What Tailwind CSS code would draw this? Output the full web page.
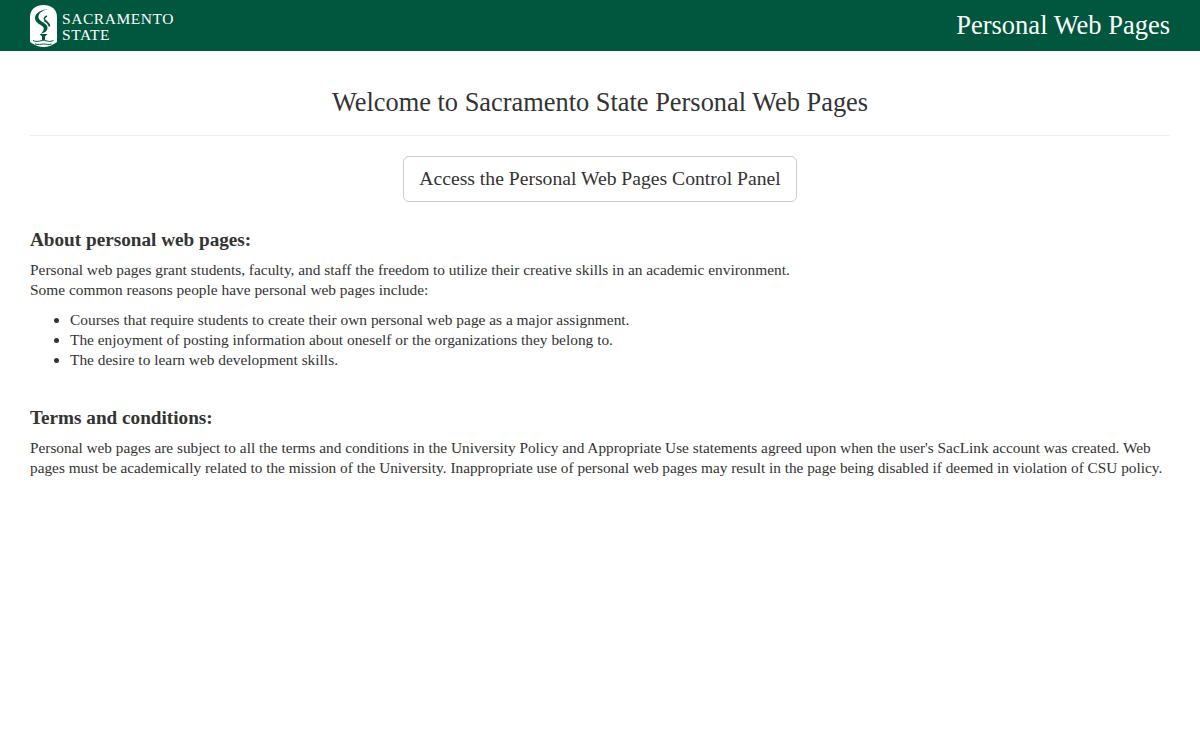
<!DOCTYPE html>
<html lang="en">
<head>
<meta charset="UTF-8">
<title>Personal Web Pages</title>
<script src="https://cdn.jsdelivr.net/npm/@tailwindcss/browser@4"></script>
</head>
<body class="bg-white text-[#333] font-['Liberation_Serif',serif] text-[15.4px] leading-[20px]">
  <header class="h-[51px] bg-[#00573d] flex items-center justify-between px-[30px] text-white">
    <div class="flex items-center gap-[5px]">
      <svg width="27" height="42" viewBox="0 0 27 42">
        <path d="M0 12C0 4 6 0 13.500 0S27 4 27 12v25c-4 3-9 5-13.500 5S4 40 0 37z" fill="#fff"/>
        <path d="M19 4c-6 1-11 4-10.500 8.500s9 5.500 9 10-4 5-6.500 6.500c1.500-2.500 3.500-4 2.500-6.500s-8.500-4-8.500-9.500S13 4 19 4z" fill="#00573d"/>
        <path d="M17 11c-2.500 1-3.500 2.500-2 4s4.500 3 4.500 6.500c0-3-3.500-4.500-5-6" fill="none" stroke="#00573d" stroke-width="1.500"/>
        <path d="M9.500 29h8l-2.500 2.500V35h-3v-3.500z" fill="#00573d"/>
        <path d="M3 35.500c4 2 7 0 10.500 0s6 2 10 0M5 39c3 1 6 0 8.500 0s5 1 8 0" fill="none" stroke="#00573d"/>
      </svg>
      <div class="text-[15.5px] leading-[16px] tracking-[0.55px] pt-[2px]">SACRAMENTO<br>STATE</div>
    </div>
    <div class="text-[26.500px] pb-[2px]">Personal Web Pages</div>
  </header>
  <main class="px-[30px]">
    <h1 class="text-[26.400px] leading-[30px] text-center pt-[36px] pb-[18px] border-b border-[#eee]">Welcome to Sacramento State Personal Web Pages</h1>
    <div class="flex justify-center mt-[20px]">
      <a class="border border-[#ccc] rounded-md w-[394px] h-[46px] flex items-center justify-center text-[19.650px] pb-[2px]">Access the Personal Web Pages Control Panel</a>
    </div>
    <h2 class="font-bold text-[19.200px] mt-[28px] mb-[10px]">About personal web pages:</h2>
    <p>Personal web pages grant students, faculty, and staff the freedom to utilize their creative skills in an academic environment.<br>Some common reasons people have personal web pages include:</p>
    <ul class="list-disc pl-[40px] mt-[10px]">
      <li>Courses that require students to create their own personal web page as a major assignment.</li>
      <li>The enjoyment of posting information about oneself or the organizations they belong to.</li>
      <li>The desire to learn web development skills.</li>
    </ul>
    <h2 class="font-bold text-[19.200px] mt-[38px] mb-[10px]">Terms and conditions:</h2>
    <p class="text-[15.3px]">Personal web pages are subject to all the terms and conditions in the University Policy and Appropriate Use statements agreed upon when the user's SacLink account was created. Web pages must be academically related to the mission of the University. Inappropriate use of personal web pages may result in the page being disabled if deemed in violation of CSU policy.</p>
  </main>
</body>
</html>
